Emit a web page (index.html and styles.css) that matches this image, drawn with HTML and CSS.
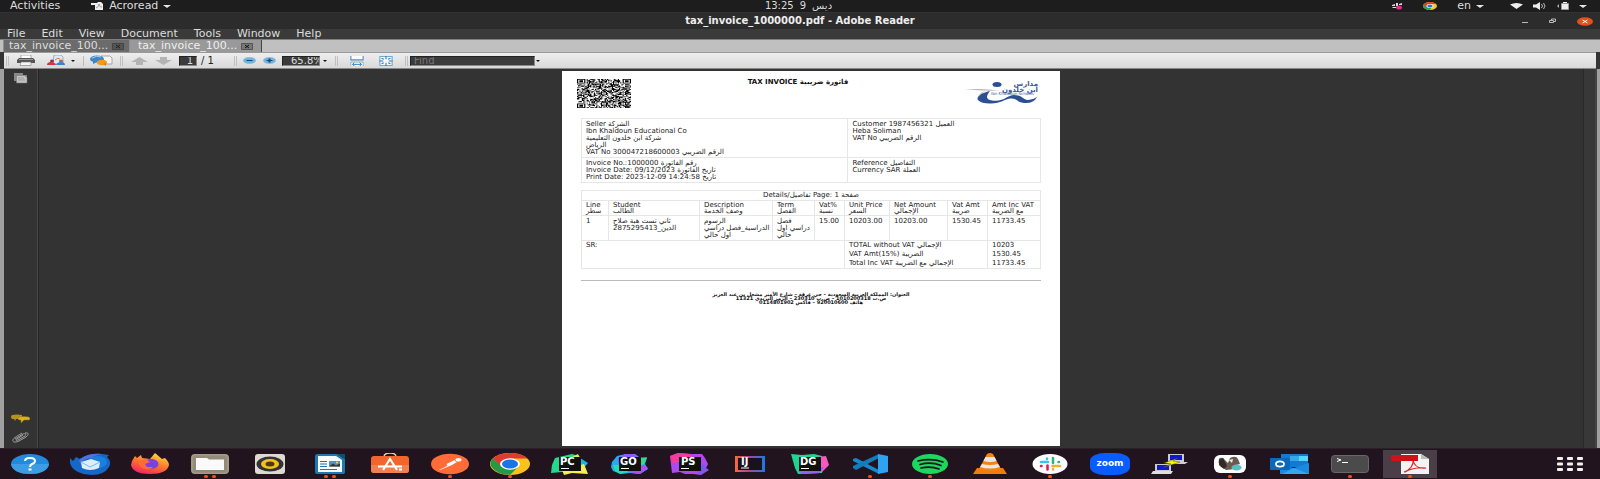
FILE: index.html
```html
<!DOCTYPE html>
<html lang="en">
<head>
<meta charset="utf-8">
<title>tax_invoice_1000000.pdf - Adobe Reader</title>
<link rel="stylesheet" href="styles.css">
</head>
<body>
<div class="desktop">
  <header class="topbar">
    <div class="topbar-side">
      <button class="plain">Activities</button>
      <button class="plain app-menu">
        <svg width="13" height="8" viewBox="0 0 13 8"><path d="M0 1h6l1-1h3l2 2v6H4V3H0z" fill="#eee"/><path d="M5 6c2-1 3-2 3-4 0 2 1 3 3 3" fill="none" stroke="#777" stroke-width=".7"/></svg>
        Acroread
        <svg width="8" height="3" viewBox="0 0 8 3"><path d="M0 0h8L4 3z" fill="#e6e6e6"/></svg>
      </button>
    </div>
    <button class="plain clock"><span>13:25</span><span>9</span><span>ديس</span></button>
    <div class="topbar-side tray">
      <svg width="12" height="8" viewBox="0 0 12 8"><path d="M1 3l3-1v2H1zM5 1h2v3H5zM8 2l3-1v2H8zM2 5h3v1H1z" fill="#ddd"/><ellipse cx="8" cy="5.400" rx="3" ry="2" fill="#ee2a86"/></svg>
      <svg class="tray-chrome" width="14" height="8" viewBox="0 0 14 8"><ellipse cx="7" cy="4" rx="7" ry="4" fill="#f9c32c"/><path d="M0 4a7 4 0 0 1 13-2H7L4 5z" fill="#e33b2e"/><path d="M0 4a7 4 0 0 0 7 4l2-3H4L1 2.500z" fill="#2ba24c"/><ellipse cx="7" cy="4" rx="3.500" ry="2" fill="#fff"/><ellipse cx="7" cy="4" rx="2.700" ry="1.500" fill="#2d6fe8"/></svg>
      <button class="plain lang">en <svg width="8" height="3" viewBox="0 0 8 3"><path d="M0 0h8L4 3z" fill="#e6e6e6"/></svg></button>
      <svg class="wifi" width="13" height="6" viewBox="0 0 13 6"><path d="M0 1.500Q6.500-1.500 13 1.500L6.500 6z" fill="#eee"/></svg>
      <svg width="14" height="8" viewBox="0 0 14 8"><path d="M0 2.500h3L7 0v8L3 5.500H0z" fill="#eee"/><path d="M8.500 2q2 2 0 4M10.500 1q3 3 0 6" fill="none" stroke="#bbb"/></svg>
      <svg width="12" height="8" viewBox="0 0 12 8"><path d="M0 4l2-2v4z" fill="#aaa"/><path d="M4.500 1.500h7v6h-7z" fill="#eee" stroke="#999"/><path d="M6 0h4v1H6z" fill="#eee"/></svg>
      <svg width="8" height="3" viewBox="0 0 8 3"><path d="M0 0h8L4 3z" fill="#e6e6e6"/></svg>
    </div>
  </header>

  <div class="titlebar">
    <h1 class="window-title">tax_invoice_1000000.pdf - Adobe Reader</h1>
    <div class="window-buttons">
      <button class="plain" aria-label="Minimize"><svg width="8" height="8" viewBox="0 0 8 8"><path d="M1 5h6v1H1z" fill="#bbb"/></svg></button>
      <button class="plain" aria-label="Restore"><svg width="8" height="6" viewBox="0 0 8 6"><path d="M.5 2.500h4v2h-4zM2.500 2V1h4v2.500H5" fill="none" stroke="#bbb"/></svg></button>
      <button class="plain" aria-label="Close"><svg width="16" height="9" viewBox="0 0 16 9"><ellipse cx="8" cy="4.500" rx="8" ry="4.300" fill="#e2501b"/><path d="M5.500 3l5 3M10.500 3l-5 3" stroke="#fff" stroke-width="1"/></svg></button>
    </div>
  </div>

  <nav class="menubar">
    <button class="plain">File</button><button class="plain">Edit</button><button class="plain">View</button><button class="plain">Document</button><button class="plain">Tools</button><button class="plain">Window</button><button class="plain">Help</button>
  </nav>

  <div class="tabs">
    <div class="tab"><button class="plain">tax_invoice_100...</button><button class="plain" aria-label="Close tab"><svg width="12" height="7" viewBox="0 0 12 7"><path d="M.5.5h11v6H.5z" fill="#555" stroke="#444"/><path d="M4 2l4 3M8 2L4 5" stroke="#222"/></svg></button></div>
    <div class="tab tab-active"><button class="plain">tax_invoice_100...</button><button class="plain" aria-label="Close tab"><svg width="12" height="7" viewBox="0 0 12 7"><path d="M.5.5h11v6H.5z" fill="#777" stroke="#555"/><path d="M4 2l4 3M8 2L4 5" stroke="#111"/></svg></button></div>
  </div>

  <div class="toolbar">
    <i class="grip"></i>
    <button class="plain" aria-label="Print"><svg width="18" height="11" viewBox="0 0 18 11"><path d="M4 0h10v4H4z" fill="#fff" stroke="#777" stroke-width=".6"/><path d="M2 3h14l2 2v3H0V5z" fill="#555"/><path d="M2 4h14v1H2z" fill="#999"/><path d="M4 7h10v3.500H3z" fill="#f5f5f5" stroke="#777" stroke-width=".6"/></svg></button>
    <button class="plain" aria-label="Share"><svg width="20" height="11" viewBox="0 0 20 11"><path d="M7 0h7l2 2v7H6z" fill="#dceaf8" stroke="#68a" stroke-width=".6"/><ellipse cx="14" cy="6" rx="2" ry="1.500" fill="#a65"/><path d="M9 10q1-3 5-3 4 0 4 3z" fill="#3b83c6"/><ellipse cx="5" cy="6" rx="2" ry="1.500" fill="#834"/><path d="M0 10q0-3 4-3 4 0 5 3z" fill="#d3324a"/><path d="M8 5q3-3 5-1" stroke="#e6742a" fill="none"/></svg></button>
    <i class="caret"></i>
    <i class="rule"></i>
    <button class="plain" aria-label="Collaborate"><svg width="23" height="11" viewBox="0 0 23 11"><path d="M11 1h9l2 2v6H11z" fill="#f5f5f5" stroke="#888" stroke-width=".7"/><ellipse cx="7" cy="4" rx="7" ry="3.600" fill="#3c86c7"/><path d="M3 6l0 3 4-2z" fill="#3c86c7"/><path d="M2 3q5-3 9-1" stroke="#a9d2f2" fill="none"/><ellipse cx="12" cy="7.500" rx="5" ry="2.700" fill="#f19a1c"/><path d="M13 9l3 2v-3z" fill="#d88010"/></svg></button>
    <i class="grip"></i>
    <button class="plain" aria-label="Previous page"><svg width="17" height="8" viewBox="0 0 17 8"><path d="M8.500 0L17 5h-5v3H5V5H0z" fill="#b4b4b4"/></svg></button>
    <button class="plain" aria-label="Next page"><svg width="17" height="8" viewBox="0 0 17 8"><path d="M8.500 8L17 3h-5V0H5v3H0z" fill="#b4b4b4"/></svg></button>
    <label class="page-nav"><input class="field page-field" value="1" aria-label="Page number"><span>/ 1</span></label>
    <i class="grip"></i>
    <button class="plain" aria-label="Zoom out"><svg width="13" height="7" viewBox="0 0 13 7"><ellipse cx="6.500" cy="3.500" rx="6.200" ry="3.300" fill="#6fb3e0" stroke="#a9bccb" stroke-width=".5"/><path d="M3.500 3h6v1h-6z" fill="#124a80"/></svg></button>
    <button class="plain" aria-label="Zoom in"><svg width="13" height="7" viewBox="0 0 13 7"><ellipse cx="6.500" cy="3.500" rx="6.200" ry="3.300" fill="#6fb3e0" stroke="#a9bccb" stroke-width=".5"/><path d="M3.500 3h6v1h-6zM5.500 1.500h2v4h-2z" fill="#124a80"/></svg></button>
    <input class="field zoom-field" value="65.8%" aria-label="Zoom level">
    <i class="caret"></i>
    <i class="grip"></i>
    <button class="plain" aria-label="Fit width"><svg width="14" height="10" viewBox="0 0 12 9"><path d="M.5 0v3.500h11V0" fill="#fff" stroke="#4c92c4"/><path d="M.5 9V5.500h11V9" fill="#fff" stroke="#999" stroke-width=".7"/><path d="M2 7.500h8M3.500 6L2 7.500 3.500 9M8.500 6L10 7.500 8.500 9" stroke="#2b7fc0" fill="none" stroke-width=".9"/></svg></button>
    <button class="plain" aria-label="Fit page"><svg width="14" height="10" viewBox="0 0 12 9"><path d="M.5.5h11v8H.5z" fill="#f4f9fd" stroke="#74a9d0"/><path d="M6 0v3M6 9V6M0 4.500h3.500M12 4.500H8.500M2 2l2 1M10 2L8 3M2 7l2-1M10 7L8 6" stroke="#2b7fc0"/></svg></button>
    <i class="grip"></i>
    <input class="field find-field" placeholder="Find" aria-label="Find">
    <i class="caret"></i>
  </div>

  <div class="viewer">
    <aside class="side">
      <button class="plain" aria-label="Pages"><svg width="15" height="11" viewBox="0 0 15 11"><path d="M1 0h9v2h4v8H4V8H1z" fill="#888"/><path d="M3.500 2.500h8l2.500 2v5.500H3.500z" fill="#c4c4c4" stroke="#777" stroke-width=".6"/><path d="M5 5h6M5 7h7" stroke="#888" stroke-width=".7"/></svg></button>
      <div class="side-bottom">
        <button class="plain" aria-label="Comments"><svg width="19" height="9" viewBox="0 0 19 9"><path d="M1 1q5-1 10 0v4H5L4 7 3 5H1q-2-2 0-4z" fill="#b8911a"/><path d="M8 3q5-1 10 0 2 2 0 3h-5l-3 3V6H8q-2-1 0-3z" fill="#dab32b" stroke="#8c6c10" stroke-width=".5"/></svg></button>
        <button class="plain" aria-label="Attachments"><svg width="17" height="11" viewBox="0 0 17 11"><path d="M3 7l8-5c2-1 4 0 2 2L6 8c-2 1-3 0-1-1l6-4M13 1c4-1 4 2 1 4L7 9c-4 2-7 1-6-1 0-2 6-5 9-7" fill="none" stroke="#aaa" stroke-width=".9"/></svg></button>
      </div>
    </aside>
    <main class="canvas">
      <article class="sheet">
        <div class="sheet-head">
          <svg class="qr" viewBox="0 0 45 45" preserveAspectRatio="none" role="img" aria-label="QR code"><path id="qr" d=""/></svg>
          <h2 class="sheet-title">TAX INVOICE <bdi>فاتورة ضريبية</bdi></h2>
          <svg class="logo" viewBox="0 0 74 24" role="img" aria-label="Ibn Khaldoun schools">
            <ellipse cx="32" cy="3.500" rx="4.500" ry="2.500" fill="#2c4f94"/>
            <path d="M0 8.500Q18 7 34 9.500 18 10 0 8.500z" fill="#b5b5b5"/>
            <path d="M25 10Q18 18 27 19.500C40 21 42 14 49 14c8 0 9 5 14 5q5 0 9-3-3 6-11 6c-9 0-9-5-15-4.500C39 18 36 23 24 22.500 9 22 8 14 25 10z" fill="#2c4f94"/>
            <path d="M21 10Q14 13 13 18q0-5 5-7z" fill="#aaa"/>
            <text class="logo-word" x="73" y="5" text-anchor="end" direction="ltr">مدارس</text>
            <text class="logo-word" x="73" y="11" text-anchor="end" direction="ltr">ابن خلدون</text>
            <text class="logo-sub" x="26" y="14">Ibn Khaldoun Schools</text>
          </svg>
        </div>

        <section class="parties">
          <div class="party">
            <p>Seller <bdi>الشركة</bdi></p><p>Ibn Khaldoun Educational Co</p><p><bdi>شركة ابن خلدون التعليمية</bdi></p><p><bdi>الرياض</bdi></p><p>VAT No 300047218600003 <bdi>الرقم الضريبي</bdi></p>
          </div>
          <div class="party">
            <p>Customer 1987456321 <bdi>العميل</bdi></p><p>Heba Soliman</p><p>VAT No <bdi>الرقم الضريبي</bdi></p>
          </div>
          <div class="party">
            <p>Invoice No.:1000000 <bdi>رقم الفاتورة</bdi></p><p>Invoice Date: 09/12/2023 <bdi>تاريخ الفاتورة</bdi></p><p>Print Date: 2023-12-09 14:24:58 <bdi>تاريخ</bdi></p>
          </div>
          <div class="party">
            <p>Reference <bdi>التفاصيل</bdi></p><p>Currency SAR <bdi>العملة</bdi></p>
          </div>
        </section>

        <table class="details">
          <colgroup><col class="c-line"><col class="c-student"><col class="c-desc"><col class="c-term"><col class="c-vat"><col class="c-price"><col class="c-net"><col class="c-vatamt"><col class="c-total"></colgroup>
          <thead>
            <tr class="row-caption"><th colspan="9">Details/<bdi>تفاصيل</bdi> Page: 1 <bdi>صفحة</bdi></th></tr>
            <tr class="row-heads">
              <th>Line<br><bdi>سطر</bdi></th><th>Student<br><bdi>الطالب</bdi></th><th>Description<br><bdi>وصف الخدمة</bdi></th><th>Term<br><bdi>الفصل</bdi></th><th>Vat%<br><bdi>نسبة</bdi></th><th>Unit Price<br><bdi>السعر</bdi></th><th>Net Amount<br><bdi>الإجمالي</bdi></th><th>Vat Amt<br><bdi>ضريبة</bdi></th><th>Amt Inc VAT<br><bdi>مع الضريبة</bdi></th>
            </tr>
          </thead>
          <tbody>
            <tr class="row-item">
              <td>1</td><td><bdi>ثاني تست هبة صلاح</bdi><br>2875295413_<bdi>الدين</bdi></td><td><bdi>الرسوم</bdi><br><bdi>الدراسية_فصل دراسي</bdi><br><bdi>اول حالي</bdi></td><td><bdi>فصل</bdi><br><bdi>دراسي اول</bdi><br><bdi>حالي</bdi></td><td>15.00</td><td>10203.00</td><td>10203.00</td><td>1530.45</td><td>11733.45</td>
            </tr>
          </tbody>
          <tfoot>
            <tr><td colspan="5" rowspan="3">SR:</td><td colspan="3">TOTAL without VAT <bdi>الإجمالي</bdi></td><td>10203</td></tr>
            <tr><td colspan="3">VAT Amt(15%) <bdi>الضريبة</bdi></td><td>1530.45</td></tr>
            <tr><td colspan="3">Total Inc VAT <bdi>الإجمالي مع الضريبة</bdi></td><td>11733.45</td></tr>
          </tfoot>
        </table>

        <footer class="sheet-foot" dir="rtl" lang="ar">
          <p>العنوان: المملكة العربية السعودية – حي عرقة – شارع الأمير مشعل بن عبد العزيز</p>
          <p>ص.ت 1010200318 – ص.ب 230310 – الرمز البريدي 11321</p>
          <p>هاتف 920010600 – فاكس 0114801902</p>
        </footer>
      </article>
    </main>
    <div class="scroll"></div>
  </div>

  <nav class="dock">
    <button class="dock-item" aria-label="Help"><svg viewBox="0 0 40 22"><ellipse cx="20" cy="11" rx="19" ry="10" fill="#2389dc"/><path d="M1 11h38q-2 10-19 10T1 11z" fill="#3c9de6"/><path d="M15 8q0-3 5-3t5 3q0 2-3 3-2 1-2 3" fill="none" stroke="#fff" stroke-width="2"/><path d="M18.500 15.500h3v2h-3z" fill="#fff"/></svg></button>
    <button class="dock-item" aria-label="Thunderbird"><svg viewBox="0 0 40 22"><path d="M0 5l3 3 3-4 4 2q8-6 22-5l7 1-2 2q5 5 2 10-5 8-17 8Q3 21 0 10z" fill="#1567c8"/><path d="M10 6q8-6 22-5-8 1-10 4-9 0-11 6-3-3-1-5z" fill="#4f72e0"/><ellipse cx="28" cy="9" rx="9" ry="6" fill="#1b7fe0"/><path d="M11 9l10-3 9 3-1 6q-9 4-17 0z" fill="#dcefff"/><path d="M11 9l9 5 10-5" fill="none" stroke="#7fb7ec"/></svg></button>
    <button class="dock-item" aria-label="Firefox"><svg viewBox="0 0 40 22"><defs><linearGradient id="ff" x1=".8" y1="0" x2=".3" y2="1"><stop offset="0" stop-color="#ffe14a"/><stop offset=".5" stop-color="#ff7a2a"/><stop offset="1" stop-color="#f5205f"/></linearGradient></defs><path d="M2 8l3-5 2 2 4-3 1 3 8 1 5-6 7 6 3-1q4 4 4 7-2 9-19 9T1 12z" fill="url(#ff)"/><ellipse cx="21" cy="11" rx="7.500" ry="5" fill="#7b41d8"/><path d="M8 8l8-2 4 3-5 2 2 3h6q-2 3-8 2-7-2-7-8z" fill="#ff6a35"/></svg></button>
    <button class="dock-item has-dot has-two" aria-label="Files"><svg viewBox="0 0 40 22"><rect x="1" y="1" width="38" height="20" rx="4" fill="#a39a87"/><rect x="3" y="2.500" width="34" height="17" rx="3" fill="#948b79"/><path d="M6 5h11l2 1.500h15v10.500H6z" fill="#fafafa"/></svg></button>
    <button class="dock-item" aria-label="Rhythmbox"><svg viewBox="0 0 40 22"><rect x="5" y="1" width="30" height="20" rx="3" fill="#dedad2"/><ellipse cx="20" cy="11" rx="13.500" ry="7.500" fill="#333"/><ellipse cx="20" cy="11" rx="9" ry="5" fill="#f5c21b"/><ellipse cx="20" cy="11" rx="4.500" ry="2.500" fill="#4b3a12"/></svg></button>
    <button class="dock-item has-dot has-two" aria-label="Writer"><svg viewBox="0 0 40 22"><path d="M5 3q0-2 3-2h19l8 5v13q0 2-3 2H8q-3 0-3-2z" fill="#1c79ae"/><path d="M27 1h8v5z" fill="#0b4f78"/><path d="M8 3h18l6 4v12H8z" fill="#f8fbfd"/><path d="M10 8.500h7M10 11h7M10 13.500h7M10 16.500h17" stroke="#1c79ae"/><path d="M19 8h11v5.500H19z" fill="#5f8fb0"/><path d="M19 13.500l4-3 3 2 4-2v3z" fill="#333"/><circle cx="27" cy="9.500" r="1" fill="#ffd34d"/></svg></button>
    <button class="dock-item" aria-label="Software"><svg viewBox="0 0 40 22"><path d="M14 4q0-4 6-4t6 4" fill="none" stroke="#e5c9a8" stroke-width="1.500"/><rect x="1" y="3" width="38" height="17" rx="3" fill="#f2662e"/><path d="M1 12h38v5q0 3-3 3H4q-3 0-3-3z" fill="#f08050"/><path d="M13 17l7-11 7 11M8 13.500h24M29 16.500h3" fill="none" stroke="#fff" stroke-width="2.200"/></svg></button>
    <button class="dock-item has-dot" aria-label="Postman"><svg viewBox="0 0 40 22"><ellipse cx="20" cy="11" rx="19" ry="10.300" fill="#ff6c37"/><path d="M9 17l10-5 5-4 3 1-5 3-12 5z" fill="#fff"/><ellipse cx="28.500" cy="6.800" rx="3" ry="1.800" fill="#fff"/><path d="M17 12l8-4" stroke="#fff" stroke-width="2"/></svg></button>
    <button class="dock-item has-dot" aria-label="Chrome"><svg viewBox="0 0 40 22"><ellipse cx="20" cy="11" rx="20" ry="11" fill="#fcc21b"/><path d="M2.500 6Q8 0 20 0t17.500 5.500H20L11 13z" fill="#dd3b30"/><path d="M2.500 5.500Q-1 10 1.500 14 6 21 20 22l8-8-16-.5z" fill="#279847"/><ellipse cx="20" cy="11" rx="10" ry="5.800" fill="#fff"/><ellipse cx="20" cy="11" rx="8" ry="4.600" fill="#1b73e8"/></svg></button>
    <button class="dock-item" aria-label="PyCharm"><svg viewBox="0 0 40 22"><path d="M5 5l17-4 7 2 3 5 1 10-11 2-10-1-11 1 1-8z" fill="#27d78b"/><path d="M30 5l8 5-5 6z" fill="#16b5f0"/><path d="M12 17l22-6 4 10-16-1-8 2z" fill="#f7ef50"/><path d="M22 4l6-3 2 4z" fill="#d5ed55"/><rect x="9" y="4" width="22" height="14" fill="#111"/><path d="M11 15.500h8" stroke="#fff"/><text class="ide" x="10" y="12">PC</text></svg></button>
    <button class="dock-item" aria-label="GoLand"><svg viewBox="0 0 40 22"><path d="M2 9l5-6 9-2h9l4 3 8 1-2 6 3 5-8 5-10-1-9 1-8-3-2-4z" fill="#28a9ef"/><path d="M8 5l7-4h10l5 6-22 3z" fill="#8b5cf5"/><path d="M28 6l9-2-3 7-4 2z" fill="#32df80"/><path d="M17 17l16-5 5 3-8 6-8-1z" fill="#b44bf0"/><path d="M3 12h6l9 7-8 2-5-3z" fill="#20dfb3"/><rect x="9" y="4" width="22" height="14" fill="#111"/><path d="M11 15.500h8" stroke="#fff"/><text class="ide" x="10" y="12">GO</text></svg></button>
    <button class="dock-item" aria-label="PhpStorm"><svg viewBox="0 0 40 22"><path d="M0 3l8-3 14 1 10 0 3 4 3 6-2 4 3 2-8 5-8-1-8 0-5-2-8 1z" fill="#af49ee"/><path d="M0 3l8-3 12 1 3 4-14 4-7 1z" fill="#f63b9b"/><path d="M24 17l10-6 3 6-6 4z" fill="#7558f6"/><rect x="9" y="4" width="22" height="14" fill="#111"/><path d="M11 15.500h8" stroke="#fff"/><text class="ide" x="11" y="12">PS</text></svg></button>
    <button class="dock-item" aria-label="IntelliJ IDEA"><svg viewBox="0 0 40 22"><defs><linearGradient id="ij"><stop offset="0" stop-color="#f86a38"/><stop offset=".45" stop-color="#b04690"/><stop offset="1" stop-color="#1779ee"/></linearGradient></defs><rect x="5" y="3" width="30" height="16" fill="url(#ij)"/><rect x="8" y="5" width="24" height="12" fill="#17131d"/><path d="M11 15h8" stroke="#fff"/><text class="ide" x="11" y="12">IJ</text></svg></button>
    <button class="dock-item" aria-label="DataGrip"><svg viewBox="0 0 40 22"><path d="M1 1l11 1 12-1 8 2 2 8-2 9-24 1-3-6z" fill="#20d493"/><path d="M27 4l9-1 3 9-7 7z" fill="#fb57c2"/><path d="M7 18l27-4-4 6-16 1z" fill="#8c65ee"/><rect x="9" y="4" width="22" height="14" fill="#111"/><path d="M11 15.500h8" stroke="#fff"/><text class="ide" x="10" y="12">DG</text></svg></button>
    <button class="dock-item has-dot" aria-label="Visual Studio Code"><svg viewBox="0 0 40 22"><path d="M3 6l3-1 23 12v4L3 8z" fill="#1787cc"/><path d="M3 15l3 2L29 5V1L3 13z" fill="#147bbb"/><path d="M28 1l10 2v16l-10 2z" fill="#2ea4f0"/><path d="M28 6v10l-10-5z" fill="#22141f"/></svg></button>
    <button class="dock-item has-dot" aria-label="Spotify"><svg viewBox="0 0 40 22"><ellipse cx="20" cy="11" rx="18" ry="10" fill="#1ed760"/><path d="M8 8q13-3 25 1M10 11.500q11-3 21 1M11 15q10-2 18 1" fill="none" stroke="#171717" stroke-width="1.700" stroke-linecap="round"/></svg></button>
    <button class="dock-item" aria-label="VLC"><svg viewBox="0 0 40 22"><path d="M7 15h26l4 6H3z" fill="#ef7d0b"/><path d="M17 1q3-2 6 0l8 15q-11 4-22 0z" fill="#f38414"/><path d="M15.500 4h9l2 4q-6 2-13 0zM12 11q8 2 16 0l2 3q-10 3-20 0z" fill="#e8e8e8"/></svg></button>
    <button class="dock-item has-dot" aria-label="Slack"><svg viewBox="0 0 40 22"><ellipse cx="20" cy="11" rx="17.500" ry="10" fill="#fff"/><g fill="none" stroke-width="2.600" stroke-linecap="round"><path d="M11 9h7M17 5.500v.5" stroke="#36c5f0"/><path d="M23 5v5M29 9h-.5" stroke="#2eb67d"/><path d="M22.500 13H30M23 16v.5" stroke="#ecb22e"/><path d="M17.500 12.500v4M11 13h.5" stroke="#e01e5a"/></g></svg></button>
    <button class="dock-item" aria-label="Zoom"><svg viewBox="0 0 40 22"><rect x="0" y="0" width="40" height="22" rx="15" ry="8" fill="#0b5cff"/><text class="zoom-word" x="20" y="13" text-anchor="middle">zoom</text></svg></button>
    <button class="dock-item" aria-label="PuTTY"><svg viewBox="0 0 40 22"><path d="M18 1h16v8H18z" fill="#ccc"/><path d="M20 2h12v5H20z" fill="#1115d5"/><path d="M21 9h17l-3 2H20zM5 11h16v7H5z" fill="#ccc"/><path d="M7 12h12v5H7z" fill="#1115d5"/><path d="M3 18h20l-2 3H1z" fill="#ddd"/><path d="M28 5l-14 5 7 1-9 4 18-6-7-1z" fill="#fff200" stroke="#333" stroke-width=".4"/></svg></button>
    <button class="dock-item has-dot" aria-label="DBeaver"><svg viewBox="0 0 40 22"><rect x="4" y="2" width="32" height="18" rx="6" fill="#fff"/><path d="M9 8q-1-4 4-3l5 5 2-5q6-3 8 1l2 5-4 1-1 4-9 1-7-5z" fill="#6a5a50"/><path d="M9 7q-2 5 5 9l3-3-4-8z" fill="#302b29"/><path d="M19 7l4-1-1 4z" fill="#eee"/><ellipse cx="26.500" cy="14.500" rx="5" ry="3" fill="#59bfc4"/></svg></button>
    <button class="dock-item" aria-label="Outlook"><svg viewBox="0 0 40 22"><path d="M11 1h27v13H11z" fill="#1479cf"/><path d="M20 3h18v5H20z" fill="#36a8e9"/><path d="M29 3h9v5h-9z" fill="#58d5fc"/><path d="M10 12l14 3 15-5v11H10z" fill="#1b8bdf"/><path d="M24 15l15 6H12z" fill="#38a6ee"/><rect y="5" width="20" height="12" rx="1" fill="#0b68ba"/><ellipse cx="10" cy="11" rx="4" ry="2.600" fill="none" stroke="#fff" stroke-width="1.800"/></svg></button>
    <button class="dock-item has-dot" aria-label="Terminal"><svg viewBox="0 0 40 22"><rect x="1.500" y="2.500" width="37" height="17" rx="3" fill="#4b4b4b" stroke="#686868"/><path d="M7 5.500l4 1.500-4 1.500M12 9.500h6" fill="none" stroke="#fff"/></svg></button>
    <button class="dock-item has-dot is-current" aria-label="Adobe Reader"><svg viewBox="0 0 40 22"><path d="M11 1h20l8 5v15H11z" fill="#f3f3f3"/><path d="M31 1v5h8z" fill="#bbb"/><path d="M14 19c6-2 10-7 9-12 1 5 5 9 13 8-8-1-17 1-21 4" fill="none" stroke="#e1252b" stroke-width="1.100"/><path d="M1 2h27v6H1z" fill="#cf1219"/></svg></button>
    <button class="dock-item show-apps" aria-label="Show applications"><svg viewBox="0 0 40 22"><g fill="#f2f2f2"><rect x="7" y="4" width="6" height="3" rx="1"/><rect x="17" y="4" width="6" height="3" rx="1"/><rect x="27" y="4" width="6" height="3" rx="1"/><rect x="7" y="9.500" width="6" height="3" rx="1"/><rect x="17" y="9.500" width="6" height="3" rx="1"/><rect x="27" y="9.500" width="6" height="3" rx="1"/><rect x="7" y="15" width="6" height="3" rx="1"/><rect x="17" y="15" width="6" height="3" rx="1"/><rect x="27" y="15" width="6" height="3" rx="1"/></g></svg></button>
  </nav>
</div>
<script src="qr.js"></script>
</body>
</html>
```
FILE: styles.css
```css
* { box-sizing: border-box; }
body, h1, h2, p { margin: 0; }
body { font-family: "DejaVu Sans", sans-serif; background: #333; }
svg { display: block; flex: none; }
.plain { display: flex; align-items: center; margin: 0; padding: 0; border: 0; background: none; color: inherit; font: inherit; white-space: nowrap; }

.desktop { display: flex; flex-direction: column; min-height: 100vh; font-size: 11px; line-height: 10px; }

.topbar { display: grid; grid-template-columns: 1fr auto 1fr; align-items: center; height: 12px; padding: 0 13px 0 10px; background: #1d1d1d; color: #dcdcdc; }
.topbar-side { display: flex; align-items: center; gap: 31px; }
.app-menu { gap: 5px; }
.clock { gap: 6px; font-size: 10px; }
.tray { justify-content: flex-end; gap: 10px; }
.tray-chrome { margin-left: 10px; }
.lang { gap: 5px; margin-left: 10px; }
.wifi { margin-left: 16px; }

.titlebar { display: grid; grid-template-columns: 1fr auto 1fr; align-items: center; height: 17px; padding: 0 7px; background: #2c2c2c; border-top: 1px solid #333; color: #eee; }
.window-title { grid-column: 2; font-size: 10px; line-height: 12px; }
.window-buttons { display: flex; justify-content: flex-end; align-items: center; gap: 20px; }

.menubar { display: flex; align-items: center; gap: 16px; height: 10px; padding-left: 7px; background: #3a3a3a; color: #ddd; }

.tabs { display: flex; height: 13px; padding-left: 3px; background: #c0c0c0; border-top: 1px solid #808080; font-size: 11px; }
.tab { display: flex; align-items: center; justify-content: space-between; width: 126px; padding: 0 5px; background: #6b6b6b; border-left: 1px solid #909090; color: #ddd; }
.tab-active { width: 133px; padding: 0 8px; background: #999; border-right: 1px solid #444; color: #eee; }

.toolbar { display: grid; grid-template-columns: 4px 34px 28px 4px 16px 20px 20px 16px 32px 51px 10px 18px 22px 42px 6px 16px 26px 32px 8px 125px 6px; align-items: center; justify-items: center; height: 17px; margin: 0 4px; padding-left: 1px; background: linear-gradient(#eee, #d9d9d9); border-top: 1px solid #999; border-bottom: 1px solid #888; color: #222; }
.grip { width: 3px; height: 10px; border: solid #c0c0c0; border-width: 0 1px; }
.rule { width: 1px; height: 10px; background: #bbb; }
.caret { border: solid transparent; border-width: 2px 2px 0; border-top-color: #111; }
.field { height: 10px; padding: 0 3px; border: 1px solid #222; border-right-color: #888; border-bottom-color: #888; background: #3b3b3b; color: #ddd; font: 10px/8px "DejaVu Sans", sans-serif; }
.page-nav { display: flex; align-items: center; justify-self: start; gap: 4px; font-size: 10px; white-space: pre; }
.page-field { width: 18px; text-align: right; }
.zoom-field { width: 38px; padding: 0 0 0 8px; }
.find-field { width: 100%; }
.find-field::placeholder { color: #777; opacity: 1; }

.viewer { display: flex; flex: 1; border-left: 4px solid #a0a0a0; border-right: 3px solid #a0a0a0; background: #333; }
.side { display: flex; flex-direction: column; justify-content: space-between; align-items: center; width: 35px; padding: 4px 2px 5px 0; border-right: 1px solid #222; box-shadow: inset -1px 0 #484848; }
.side-bottom { display: flex; flex-direction: column; align-items: center; gap: 9px; }
.canvas { display: flex; flex: 1; justify-content: center; padding: 2px 0; }
.scroll { width: 14px; background: #383838; border-left: 1px solid #292929; border-right: 2px solid #444; }

.sheet { flex: 0 1 498px; padding: 8px 19px 0; background: #fff; color: #222; font-size: 7px; line-height: 7px; }
.sheet-head { display: grid; grid-template-columns: auto 1fr auto; align-items: start; margin: 0 2px 10px -4px; }
.qr { width: 54px; height: 29px; }
.sheet-title { font-size: 7px; line-height: 7px; color: #111; text-align: center; }
.logo { width: 74px; height: 24px; margin-top: 2px; }
.logo-word { font: bold 7px "DejaVu Sans", sans-serif; fill: #3b5b9a; }
.logo-sub { font: 4px "DejaVu Sans", sans-serif; fill: #3b5b9a; }

.parties { display: grid; grid-template-columns: 267fr 193fr; border: solid #e6e6e6; border-width: 1px 0 0 1px; }
.party { padding: 2px 4px 1px; border: solid #e6e6e6; border-width: 0 1px 1px 0; white-space: nowrap; }

.details { width: 100%; margin-top: 7px; table-layout: fixed; border-collapse: collapse; }
.details th, .details td { padding: 2px 0 1px 4px; border: 1px solid #e6e6e6; font-weight: normal; text-align: left; vertical-align: top; white-space: nowrap; }
.details .row-caption th { padding: 1px 0; text-align: center; }
.details .row-heads th { padding-top: 1px; line-height: 6px; }
.details tfoot td { padding: 1px 0 1px 4px; border-top: 0; border-bottom: 0; }
.details tfoot { border-bottom: 1px solid #e6e6e6; }
.c-line { width: 27px; }
.c-student { width: 91px; }
.c-desc { width: 73px; }
.c-term { width: 42px; }
.c-vat { width: 30px; }
.c-price { width: 45px; }
.c-net { width: 58px; }
.c-vatamt { width: 40px; }

.sheet-foot { margin-top: 11px; padding-top: 11px; border-top: 1px solid #bbb; color: #111; font-size: 5px; font-weight: bold; line-height: 4px; text-align: center; }

.dock { display: flex; height: 31px; background: #22141f; border-top: 1px solid #2b2028; }
.dock-item { position: relative; display: flex; justify-content: center; flex: 0 1 60px; padding: 4px 0 0; border: 0; background: none; }
.dock-item svg { width: 40px; height: 22px; }
.has-dot::after { content: ""; position: absolute; bottom: 1px; left: 50%; width: 4px; height: 3px; margin-left: -2px; border-radius: 2px; background: #e95420; }
.has-two::after { margin-left: -6px; box-shadow: 8px 0 #e95420; }
.is-current { background: linear-gradient(#4a3f49, #4a3f49) center / 54px 28px no-repeat; }
.show-apps { margin-left: auto; }
.ide { font: bold 10px "DejaVu Sans", sans-serif; fill: #fff; }
.zoom-word { font: bold 9px "DejaVu Sans", sans-serif; fill: #fff; }
```
FILE: qr.js
```js
// Builds the code's modules: finder squares, timing lines, alignment marks and data.
const SIZE = 45;
let seed = 20231209;

function nextBit() {
  seed = (seed * 1103515245 + 12345) % 2147483648;
  return (seed / 65536) % 2 >= 1;
}

function ring(x, y, cx, cy) {
  return Math.max(Math.abs(x - cx), Math.abs(y - cy));
}

function moduleAt(x, y) {
  const data = nextBit();
  for (const [cx, cy] of [[3, 3], [SIZE - 4, 3], [3, SIZE - 4]]) {
    const r = ring(x, y, cx, cy);
    if (r <= 4) return r !== 2 && r !== 4;
  }
  for (const cx of [22, 38]) {
    for (const cy of [22, 38]) {
      const r = ring(x, y, cx, cy);
      if (r <= 2) return r !== 1;
    }
  }
  if (x === 6 || y === 6) return (x + y) % 2 === 0;
  return data;
}

let path = "";
for (let y = 0; y < SIZE; y++) {
  for (let x = 0; x < SIZE; x++) {
    if (moduleAt(x, y)) path += `M${x} ${y}h1v1h-1z`;
  }
}
document.getElementById("qr").setAttribute("d", path);
```
